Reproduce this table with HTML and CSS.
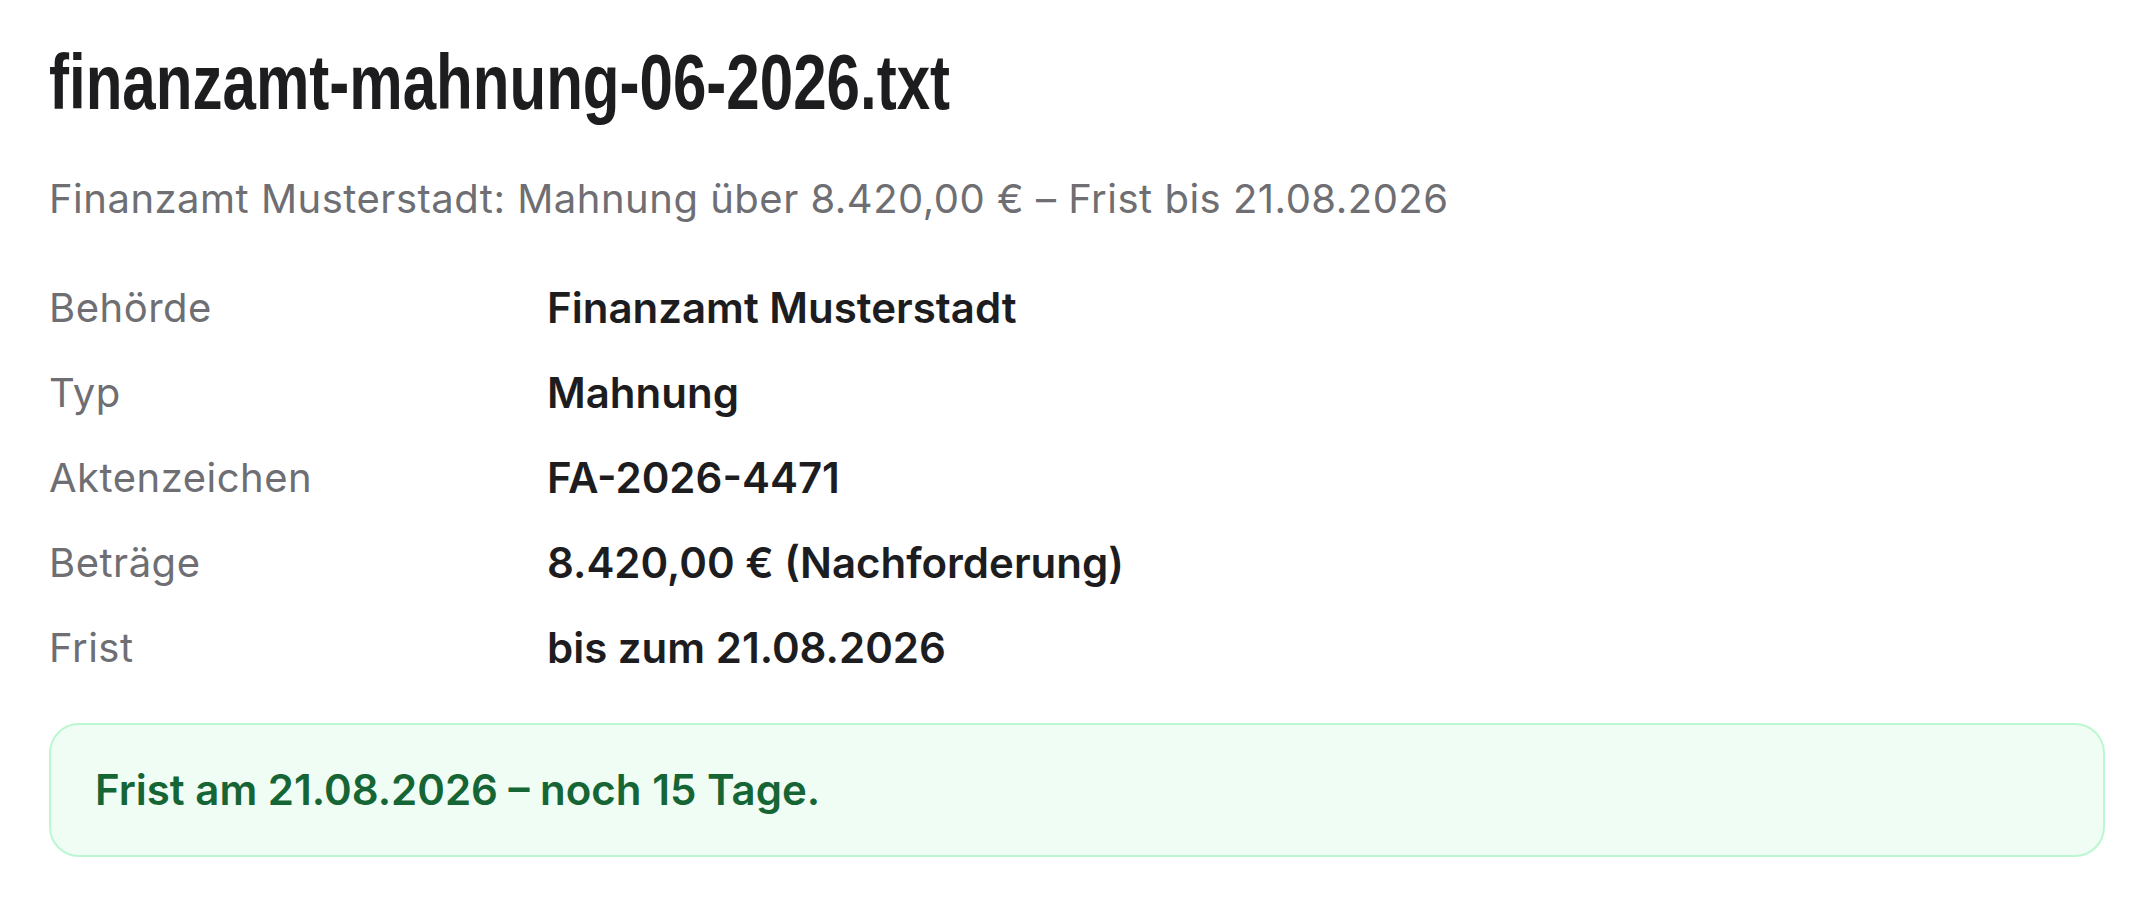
FILE: index.html
```html
<!DOCTYPE html>
<html lang="de">
<head>
    <meta charset="UTF-8">
    <meta name="viewport" content="width=device-width, initial-scale=1.0">
    <title>finanzamt-mahnung-06-2026.txt</title>
    <link rel="stylesheet" href="styles.css">
</head>
<body>
    <div class="doc">
        <h1 class="doc-title"><span>finanzamt-mahnung-06-2026.txt</span></h1>
        <p class="doc-summary">Finanzamt Musterstadt: Mahnung über 8.420,00 € – Frist bis 21.08.2026</p>

        <dl class="facts">
            <div class="fact">
                <dt>Behörde</dt>
                <dd>Finanzamt Musterstadt</dd>
            </div>
            <div class="fact">
                <dt>Typ</dt>
                <dd>Mahnung</dd>
            </div>
            <div class="fact">
                <dt>Aktenzeichen</dt>
                <dd>FA-2026-4471</dd>
            </div>
            <div class="fact">
                <dt>Beträge</dt>
                <dd>8.420,00 € (Nachforderung)</dd>
            </div>
            <div class="fact">
                <dt>Frist</dt>
                <dd>bis zum 21.08.2026</dd>
            </div>
        </dl>

        <div class="deadline ok">
            Frist am 21.08.2026 – noch 15 Tage.
        </div>
    </div>
</body>
</html>
```

FILE: styles.css
```css
* {
    margin: 0;
    padding: 0;
    box-sizing: border-box;
}

body {
    font-family: 'Inter', 'Noto Sans', sans-serif;
    color: #1d1d1f;
    background: #fff;
}

.doc {
    padding: 36px 49px 40px 49px;
}

.doc-title {
    font-family: 'Liberation Sans', 'Arial', sans-serif;
    font-size: 77px;
    line-height: 92px;
    font-weight: 700;
    color: #1d1d1f;
    white-space: nowrap;
}

/* no narrow face installed, so squeeze the bold one */
.doc-title span {
    display: inline-block;
    transform: scaleX(0.78);
    transform-origin: left center;
}

.doc-summary {
    margin-top: 44px;
    font-size: 40px;
    line-height: 54px;
    letter-spacing: 0.5px;
    color: #6e6e73;
}

.facts {
    margin-top: 55px;
    display: flex;
    flex-direction: column;
    gap: 31px;
}

.fact {
    display: grid;
    grid-template-columns: 498px 1fr;
    line-height: 54px;
}

.fact dt {
    font-size: 40px;
    letter-spacing: 0.5px;
    color: #6e6e73;
}

.fact dd {
    font-size: 42px;
    font-weight: 600;
    color: #1d1d1f;
}

.deadline {
    margin-top: 48px;
    padding: 38px 44px;
    border-radius: 30px;
    font-size: 42px;
    line-height: 54px;
    font-weight: 600;
}

.deadline.ok {
    background: #f0fdf4;
    border: 2px solid #bbf7d0;
    color: #166534;
}
```
